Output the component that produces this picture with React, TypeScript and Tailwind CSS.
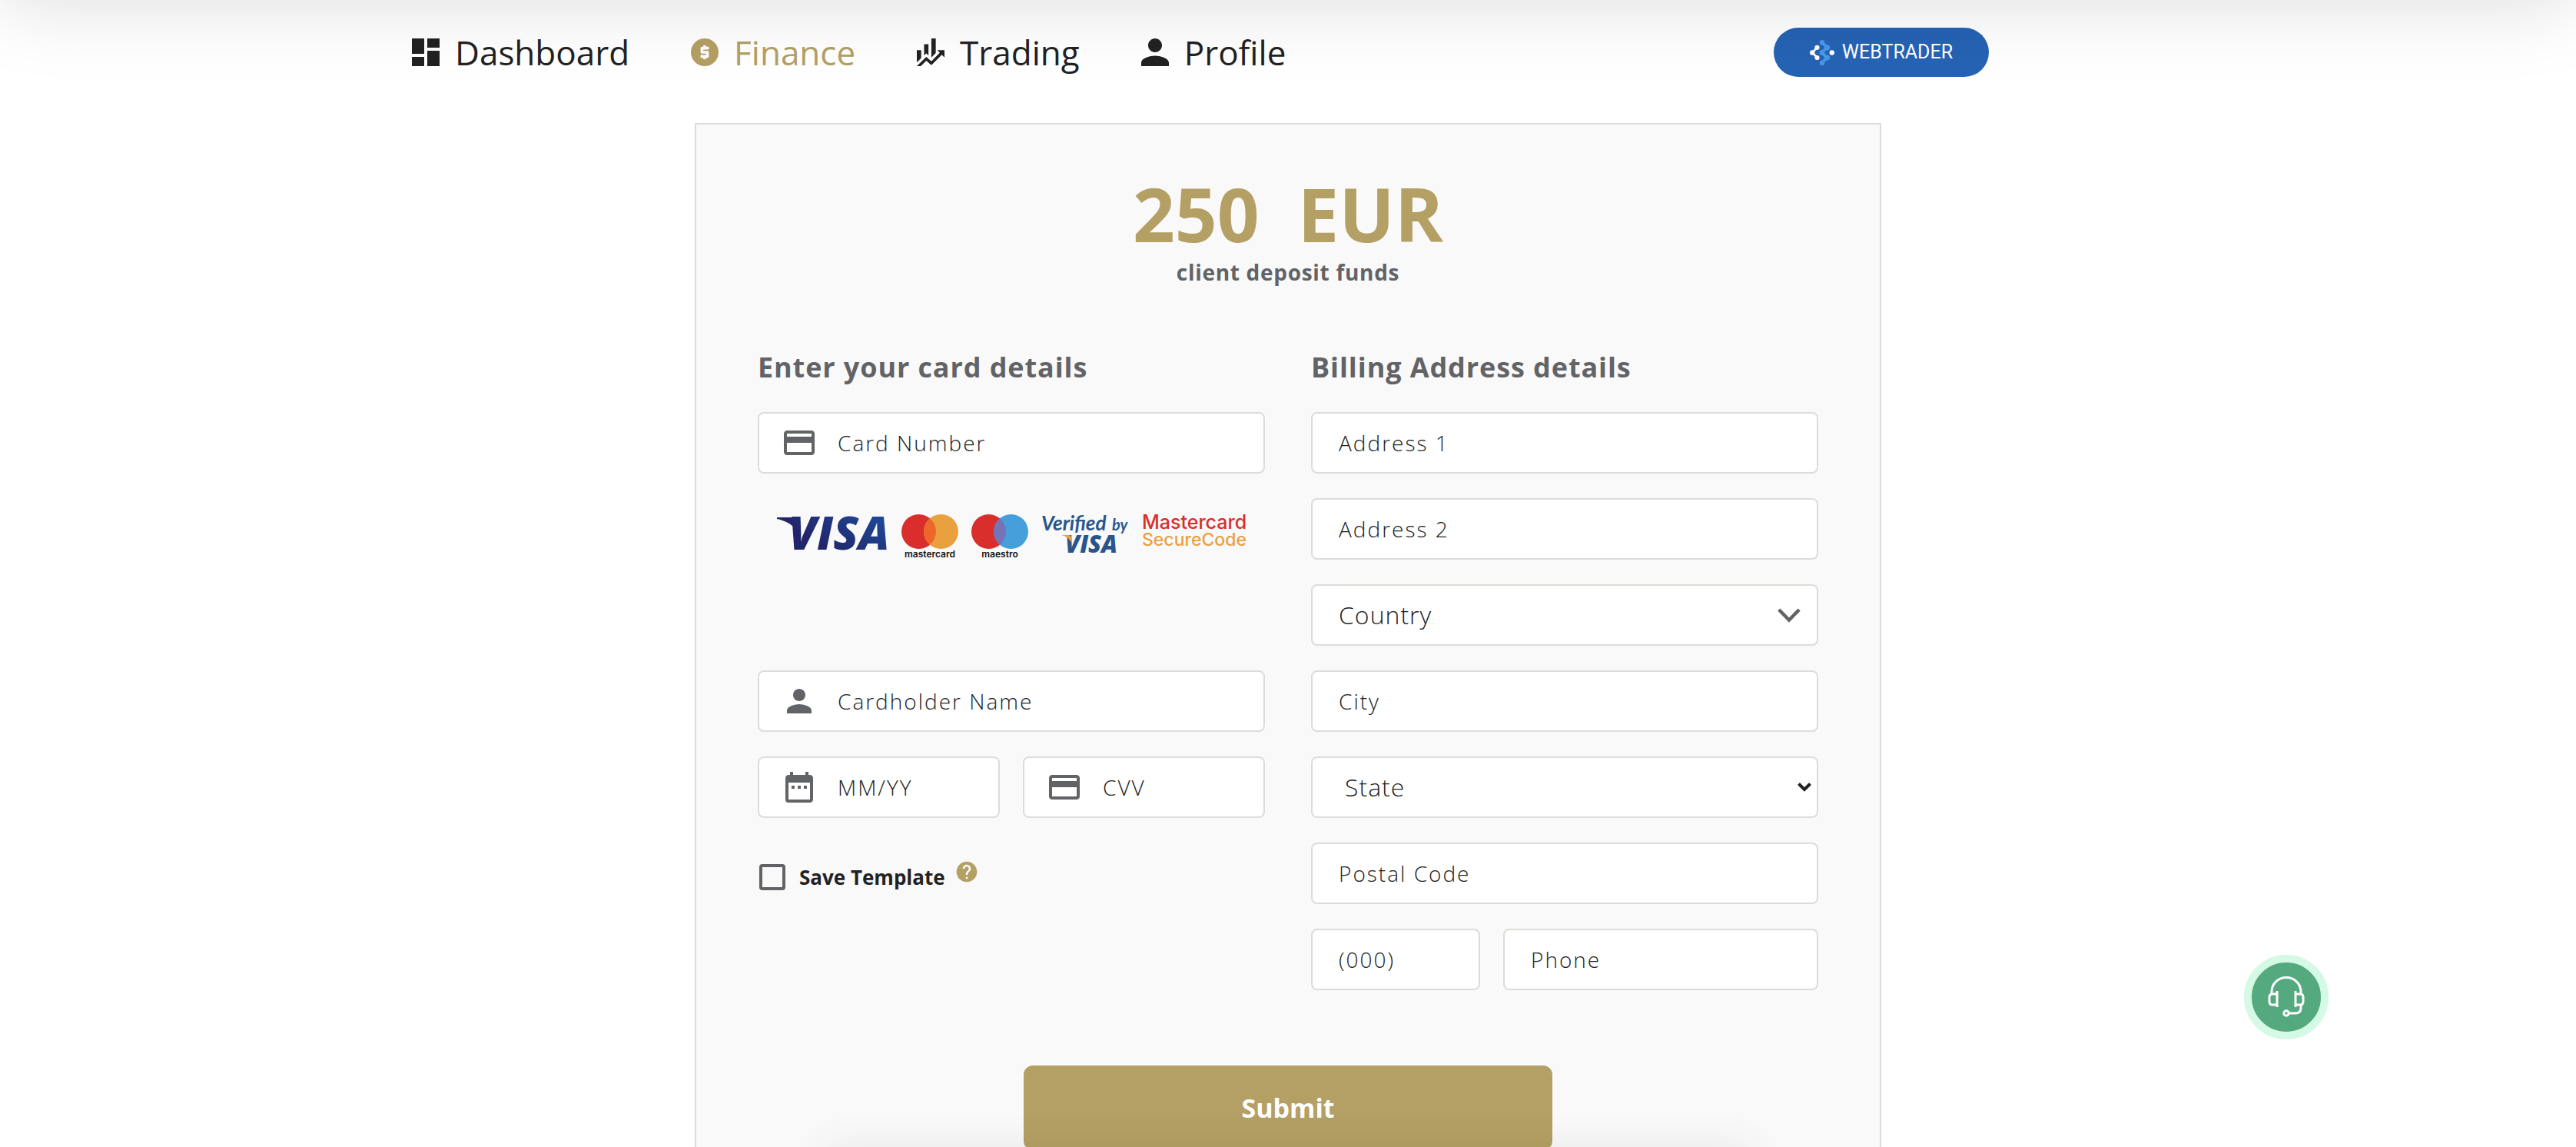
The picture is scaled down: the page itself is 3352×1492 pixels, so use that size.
import React from "react";
import {
  MdDashboard,
  MdOutlineCreditCard,
  MdPerson,
  MdDateRange,
  MdHelp,
} from "react-icons/md";

const fieldBox =
  "flex h-20 w-full items-center rounded-lg border-2 border-[#dcddd9] bg-white focus-within:border-[#b4a064]";
const fieldInput =
  "h-full w-full min-w-0 bg-transparent text-[28px] font-light tracking-[2px] text-[#222222] placeholder:text-[#222222] placeholder:opacity-100 outline-none";
const fieldSelect =
  "h-full w-full appearance-none rounded-lg bg-transparent text-[32px] font-light tracking-[1px] outline-none";

function PlainField({ label }: { label: string }) {
  return (
    <div className={fieldBox}>
      <input aria-label={label} placeholder={label} className={`${fieldInput} rounded-lg px-[34px]`} />
    </div>
  );
}

function IconField({ label, icon }: { label: string; icon: React.ReactNode }) {
  return (
    <label className={fieldBox}>
      <span className="ml-7 mr-[26px] shrink-0 text-[#626366]">{icon}</span>
      <input aria-label={label} placeholder={label} className={fieldInput} />
    </label>
  );
}

function CoinIcon() {
  return (
    <svg viewBox="2 2 20 20" className="size-9" fill="currentColor" aria-hidden="true">
      <path d="M12,2A10,10 0 0,1 22,12A10,10 0 0,1 12,22A10,10 0 0,1 2,12A10,10 0 0,1 12,2M11,17H13V16H14A1,1 0 0,0 15,15V12A1,1 0 0,0 14,11H11V10H15V8H13V7H11V8H10A1,1 0 0,0 9,9V12A1,1 0 0,0 10,13H13V14H9V16H11V17Z" />
    </svg>
  );
}

function ChartIcon() {
  return (
    <svg viewBox="3 3 19 19" className="size-9" fill="currentColor" aria-hidden="true">
      <path d="M6,16.5L3,19.44V11H6M11,14.66L9.43,13.32L8,14.64V7H11M16,13L13,16V3H16M18.81,12.81L17,11H22V16L20.21,14.21L13,21.36L9.53,18.34L5.75,22H3L9.47,15.66L13,18.64" />
    </svg>
  );
}

function WebtraderMark() {
  return (
    <svg viewBox="0 0 32 33" className="h-[33px] w-8" aria-hidden="true">
      <g stroke="#4a97ea" strokeWidth="4" fill="none" strokeLinejoin="round">
        <path d="M16 3 22 10 16 16.500 22 23 16 30" />
      </g>
      <g fill="#4a97ea">
        <circle cx="16" cy="3.200" r="3.200" />
        <circle cx="22.500" cy="9.800" r="3.600" />
        <circle cx="16" cy="16.500" r="3.400" />
        <circle cx="22.500" cy="23" r="3.600" />
        <circle cx="16" cy="29.800" r="3.200" />
      </g>
      <path d="M9.500 9.500 3.500 16.500 9.500 23" stroke="#ffffff" strokeWidth="2.600" fill="none" />
      <g fill="#ffffff">
        <circle cx="9.500" cy="9.800" r="3.100" />
        <circle cx="3.200" cy="16.500" r="3.200" />
        <circle cx="9.500" cy="23" r="3.100" />
        <circle cx="28.800" cy="16.500" r="3.200" />
      </g>
    </svg>
  );
}

const navItems = [
  { label: "Dashboard", icon: <MdDashboard viewBox="3 3 18 18" className="size-9" />, active: false },
  { label: "Finance", icon: <CoinIcon />, active: true },
  { label: "Trading", icon: <ChartIcon />, active: false },
  { label: "Profile", icon: <MdPerson viewBox="4 4 16 16" className="size-9" />, active: false },
];

function CardLogos() {
  return (
    <div className="flex h-48 items-start gap-[17px] pl-6 pt-5">
      <svg viewBox="0 0 146 60" className="h-[60px] w-[146px] overflow-visible" role="img" aria-label="Visa">
        <defs>
          <linearGradient id="visa" x1="0" x2="1" y1="1" y2="0">
            <stop offset="0" stopColor="#22246a" />
            <stop offset="0.3" stopColor="#22256b" />
            <stop offset="1" stopColor="#1c55a5" />
          </linearGradient>
        </defs>
        <path d="M1 5h20q5 0 6 5l5 22q-7-20-31-25z" fill="#22256b" />
        <text x="16" y="47" fontFamily="'Open Sans', sans-serif" fontSize="60" fontWeight="800" fontStyle="italic" fill="url(#visa)">
          VISA
        </text>
      </svg>
      <svg viewBox="0 0 74 60" className="h-[60px] w-[74px] overflow-visible" role="img" aria-label="mastercard">
        <circle cx="22.500" cy="23.500" r="22.500" fill="#d92e2c" />
        <circle cx="51.500" cy="23.500" r="22.500" fill="#e9a140" />
        <path d="M37 6.300a22.500 22.500 0 0 1 0 34.400a22.500 22.500 0 0 1 0-34.400z" fill="#ed672b" />
        <text x="37" y="57" textAnchor="middle" fontFamily="Inter, sans-serif" fontSize="12" fontWeight="600" fill="#111111">
          mastercard
        </text>
      </svg>
      <svg viewBox="0 0 74 60" className="h-[60px] w-[74px] overflow-visible" role="img" aria-label="maestro">
        <circle cx="22.500" cy="23.500" r="22.500" fill="#d92e2c" />
        <circle cx="51.500" cy="23.500" r="22.500" fill="#459fda" />
        <path d="M37 6.300a22.500 22.500 0 0 1 0 34.400a22.500 22.500 0 0 1 0-34.400z" fill="#7673b9" />
        <text x="37" y="57" textAnchor="middle" fontFamily="Inter, sans-serif" fontSize="12" fontWeight="600" fill="#111111">
          maestro
        </text>
      </svg>
      <svg viewBox="0 0 114 60" className="h-[60px] w-[114px] overflow-visible" role="img" aria-label="Verified by Visa">
        <g fontFamily="Lato, sans-serif" fontStyle="italic" fill="#29558c">
          <text x="0" y="22" fontSize="26" fontWeight="700">
            Verified
          </text>
          <text x="92" y="22" fontSize="20" fontWeight="700">
            by
          </text>
        </g>
        <text x="31" y="51" fontFamily="'Open Sans', sans-serif" fontStyle="italic" fontSize="31" fontWeight="800" fill="#29558c">
          VISA
        </text>
        <path d="M26 28h9q4 0 4 4l1 8q-4-10-14-12z" fill="#e9a140" />
      </svg>
      <svg viewBox="0 0 140 60" className="h-[60px] w-[140px] overflow-visible" role="img" aria-label="Mastercard SecureCode">
        <g fontFamily="Inter, sans-serif" fontWeight="500">
          <text x="0" y="20" fontSize="25" fill="#d92e2c">
            Mastercard
          </text>
          <text x="0" y="42" fontSize="23" fill="#e9a140">
            SecureCode
          </text>
        </g>
      </svg>
    </div>
  );
}

function HeadsetIcon() {
  return (
    <svg viewBox="0 0 48 54" className="h-[54px] w-12" fill="none" stroke="#ffffff" strokeWidth="3" aria-hidden="true">
      <path d="M5 23v-3a19 18.500 0 0 1 38 0v3" />
      <path d="M12 19v21M12 23H6q-4 0-4 4v6q0 4 4 4h6" />
      <path d="M36 19v21M36 23h6q4 0 4 4v6q0 4-4 4h-6" />
      <path d="M43 37v4q0 7-7 7H28" />
      <circle cx="24" cy="48" r="3.200" />
    </svg>
  );
}

export default function App() {
  return (
    <div className="relative h-screen overflow-y-auto bg-white font-['Open_Sans',sans-serif] text-[#222222] [scrollbar-width:none]">
      <header className="mx-auto flex h-[136px] max-w-[2280px] items-center justify-between pr-[228px]">
        <nav aria-label="Main" className="flex items-center gap-20">
          {navItems.map((item) => (
            <a
              key={item.label}
              href="#"
              aria-current={item.active ? "page" : undefined}
              className={`flex items-center gap-5 text-[44px] leading-[62px] ${item.active ? "text-[#b4a064]" : "text-[#222222]"}`}
            >
              {item.icon}
              {item.label}
            </a>
          ))}
        </nav>
        <button
          type="button"
          className="flex h-16 w-[280px] items-center justify-center gap-2.5 rounded-full bg-[#2663b4] font-['Roboto',sans-serif] text-[25px] text-white"
        >
          <WebtraderMark />
          WEBTRADER
        </button>
      </header>

      <main className="mx-auto mt-6 max-w-[1544px] border-2 border-[#dcddd9] bg-[#f9f9f9] px-20 pb-20 pt-16">
        <h1 className="text-center">
          <span className="block whitespace-pre text-[96px] font-bold leading-[104px] text-[#b4a064]">{"250  EUR"}</span>
          <span className="mt-1 block text-[28px] font-bold leading-10 tracking-wide text-[#626366]">
            client deposit funds
          </span>
        </h1>

        <form onSubmit={(e) => e.preventDefault()}>
          <div className="mt-20 grid grid-cols-2 gap-[60px]">
            <section>
              <h2 className="mb-[34px] text-4xl font-bold leading-[48px] tracking-wide text-[#626366]">
                Enter your card details
              </h2>
              <div className="flex flex-col gap-8">
                <IconField label="Card Number" icon={<MdOutlineCreditCard className="size-12" />} />
                <CardLogos />
                <IconField label="Cardholder Name" icon={<MdPerson className="size-12" />} />
                <div className="grid grid-cols-2 gap-[30px]">
                  <IconField label="MM/YY" icon={<MdDateRange className="size-12" />} />
                  <IconField label="CVV" icon={<MdOutlineCreditCard className="size-12" />} />
                </div>
                <div className="flex items-start pt-5">
                  <label className="flex items-center gap-[18px] pl-0.5 pt-2 text-[26px] font-bold leading-[34px]">
                    <input
                      type="checkbox"
                      className="size-[34px] appearance-none rounded border-4 border-[#626366] checked:bg-[#b4a064]"
                    />
                    Save Template
                  </label>
                  <button type="button" aria-label="About saved templates" className="ml-3 mt-0.5 text-[#b4a064]">
                    <MdHelp className="size-8" />
                  </button>
                </div>
              </div>
            </section>

            <section>
              <h2 className="mb-[34px] text-4xl font-bold leading-[48px] tracking-wide text-[#626366]">
                Billing Address details
              </h2>
              <div className="flex flex-col gap-8">
                <PlainField label="Address 1" />
                <PlainField label="Address 2" />
                <div className={`${fieldBox} relative`}>
                  <select aria-label="Country" className={`${fieldSelect} px-[34px]`}>
                    <option>Country</option>
                  </select>
                  <svg
                    viewBox="0 0 30 19"
                    className="pointer-events-none absolute right-[21px] h-[19px] w-[30px]"
                    fill="none"
                    stroke="#626366"
                    strokeWidth="4.500"
                    aria-hidden="true"
                  >
                    <path d="M1.800 2 15 15.500 28.200 2" />
                  </svg>
                </div>
                <PlainField label="City" />
                <div className={`${fieldBox} relative`}>
                  <select aria-label="State" className={`${fieldSelect} px-[42px]`}>
                    <option>State</option>
                  </select>
                  <svg
                    viewBox="0 0 18 12"
                    className="pointer-events-none absolute right-[7px] h-3 w-[18px]"
                    fill="none"
                    stroke="#222222"
                    strokeWidth="4"
                    aria-hidden="true"
                  >
                    <path d="M1.500 1.500 9 9 16.500 1.500" />
                  </svg>
                </div>
                <PlainField label="Postal Code" />
                <div className="grid grid-cols-[22fr_41fr] gap-[30px]">
                  <PlainField label="(000)" />
                  <PlainField label="Phone" />
                </div>
              </div>
            </section>
          </div>

          <button
            type="submit"
            className="mx-auto mt-[98px] block h-[110px] w-full max-w-[688px] rounded-xl bg-[#b4a064] text-[34px] font-bold text-white"
          >
            Submit
          </button>
        </form>
      </main>

      <div className="pointer-events-none fixed inset-x-0 bottom-full h-80 shadow-[0_0_100px_rgba(0,0,0,0.15)]" />
      <div className="pointer-events-none fixed inset-x-[32%] top-full h-40 shadow-[0_0_50px_rgba(0,0,0,0.07)]" />

      <button
        type="button"
        aria-label="Customer support"
        className="fixed bottom-[140px] right-[322px] flex size-[110px] items-center justify-center rounded-full border-10 border-[#d4f9e5] bg-[#54a97f]"
      >
        <HeadsetIcon />
      </button>
    </div>
  );
}
